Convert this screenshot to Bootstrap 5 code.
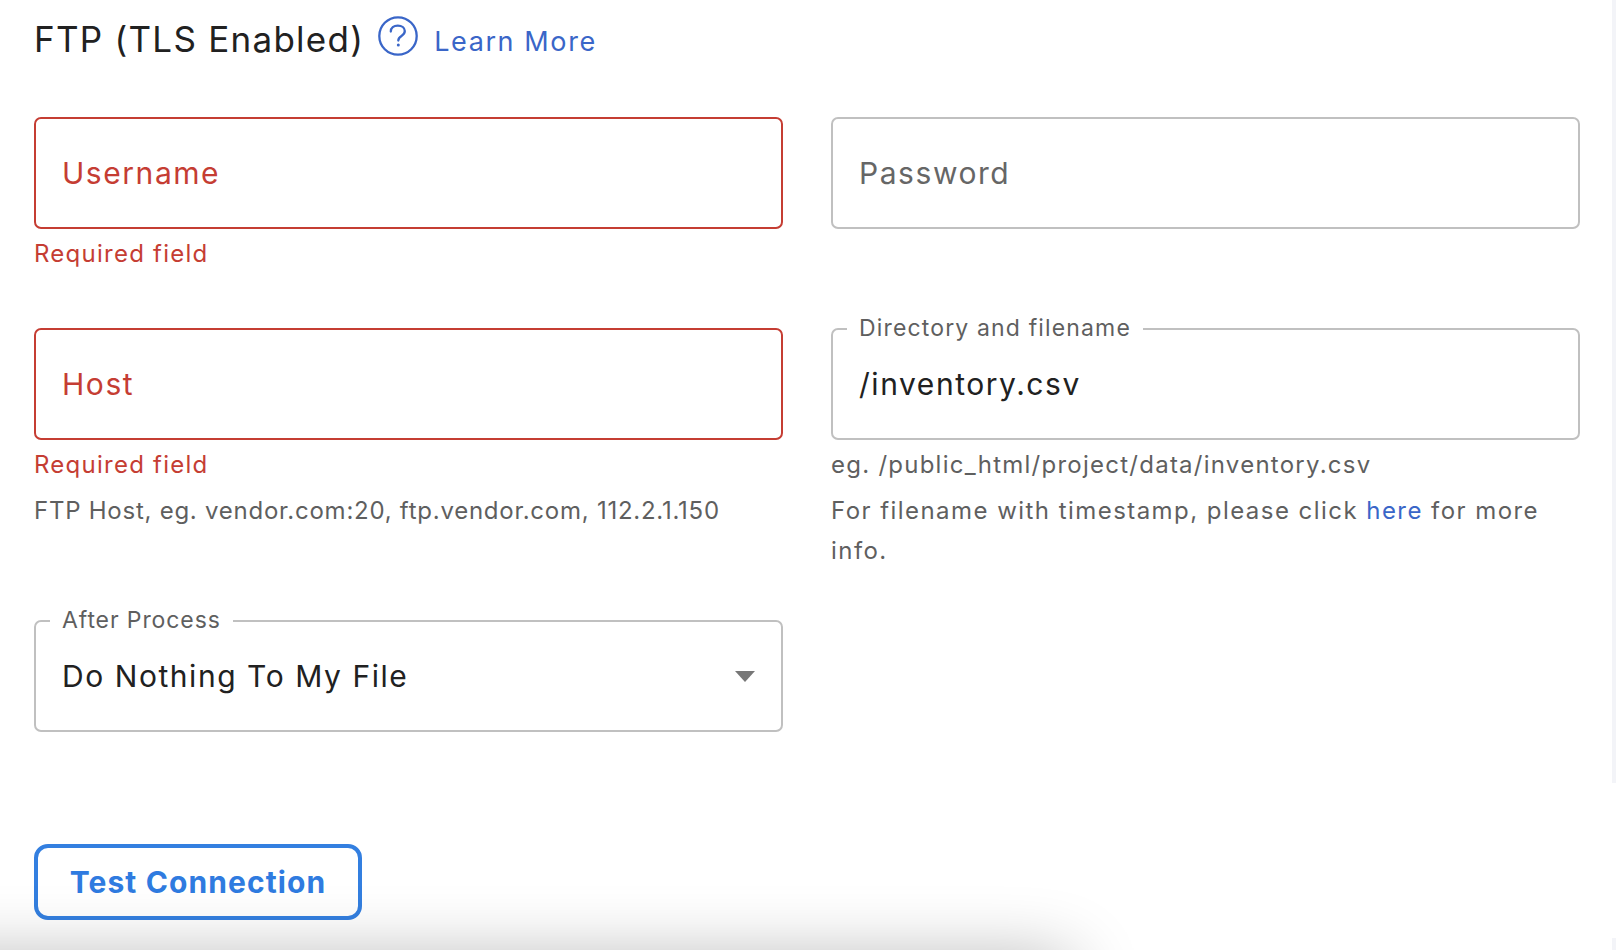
<!doctype html>
<html lang="en"><head><meta charset="utf-8"><title>FTP</title>
<link href="https://cdn.jsdelivr.net/npm/bootstrap@5.3.0/dist/css/bootstrap.min.css" rel="stylesheet">
<style>
html,body{height:950px;overflow:hidden}
body{background:#fff;font-family:"Inter","Liberation Sans",sans-serif;color:#212121;position:relative}
.page-wrap{padding:0 36px 0 34px;height:950px}
.edge-strip{position:absolute;right:0;width:4px;background:#f3f4f8}
.edge-a{top:0;height:783px}.edge-b{top:938px;bottom:0}
.bottom-glow{position:absolute;left:0;bottom:0;width:1300px;height:110px;overflow:hidden;pointer-events:none;z-index:2}
.bottom-glow::before{content:"";position:absolute;left:-120px;top:120px;width:1190px;height:60px;box-shadow:0 0 70px rgba(0,0,0,.32)}
.title-row{height:117px;padding-top:16px}
.title-text{font-size:35px;letter-spacing:1.26px;line-height:40px;font-weight:400;margin:3px 0 0;color:#212121}
.learn-link{font-size:27px;letter-spacing:1.6px;color:#3a66c8;text-decoration:none;line-height:44px;margin-top:4px}
.help-ico{width:40px;height:40px;margin:0 16px 0 14px;flex:none}
.form-cols{--bs-gutter-x:48px}
.field-box{position:relative}
.field-input.form-control,.field-input.form-select{height:112px;border:2px solid #c0c0c0;border-radius:7px;font-size:30px;padding:0 26px;color:#212121;letter-spacing:1.55px;box-shadow:none;background-color:#fff}
.field-input::placeholder{color:#666;opacity:1}
.field-input.is-err.form-control{border-color:#c53d33;background-image:none;padding-right:26px}
.field-input.is-err::placeholder{color:#c53d33}
.field-input.form-select{background-image:none}
.float-tag{position:absolute;left:16px;top:-14px;background:#fff;padding:0 12px;font-size:23px;line-height:28px;color:#5f5f5f;letter-spacing:1.15px}
.float-tag.tag-tight{letter-spacing:.9px}
.caret-tri{position:absolute;right:28px;top:50%;margin-top:-5px;width:0;height:0;border-left:10px solid transparent;border-right:10px solid transparent;border-top:11px solid #777}
.hint-line{font-size:24px;line-height:40px;color:#5f5f5f;letter-spacing:1.25px;margin:6px 0 0}
.hint-line.hint-first{margin-top:5px}
.err-line{color:#c53d33}
.hint-tight{letter-spacing:.75px}
.hint-wide{letter-spacing:1.45px}
.hint-line a{color:#3a66c8;text-decoration:none}
.row-a{height:211px}.row-b{height:292px}.row-c{height:224px}
.test-btn.btn{border:4px solid #337fe0;border-radius:14px;color:#2f7be0;background:transparent;font-size:30px;font-weight:700;height:76px;width:328px;padding:0;letter-spacing:1.1px}
</style></head><body>
<div class="edge-strip edge-a"></div><div class="edge-strip edge-b"></div>
<div class="page-wrap position-relative">
<div class="title-row d-flex align-items-start">
<h1 class="title-text">FTP (TLS Enabled)</h1>
<svg class="help-ico" viewBox="0 0 40 40" fill="none" stroke="#3a66c8" stroke-width="2.300"><circle cx="20" cy="20" r="18.700"/><path d="M12.800 15.600c0-3.600 3-6 7-6s7 2.300 7 5.500c0 2.400-1.400 3.700-3.300 4.900-1.900 1.200-3.200 2.200-3.200 4.500" stroke-linecap="round"/><circle cx="20.300" cy="29" r="1.500" fill="#3a66c8" stroke="none"/></svg>
<a class="learn-link" href="#">Learn More</a>
</div>
<div class="row form-cols row-a">
<div class="col-6"><div class="field-box"><input class="form-control field-input is-err" placeholder="Username"></div><p class="hint-line err-line hint-first">Required field</p></div>
<div class="col-6"><div class="field-box"><input class="form-control field-input" placeholder="Password"></div></div>
</div>
<div class="row form-cols row-b">
<div class="col-6"><div class="field-box"><input class="form-control field-input is-err" placeholder="Host"></div><p class="hint-line err-line hint-first">Required field</p><p class="hint-line hint-tight">FTP Host, eg. vendor.com:20, ftp.vendor.com, 112.2.1.150</p></div>
<div class="col-6"><div class="field-box"><input class="form-control field-input" value="/inventory.csv"><span class="float-tag">Directory and filename</span></div><p class="hint-line hint-first">eg. /public_html/project/data/inventory.csv</p><p class="hint-line hint-wide">For filename with timestamp, please click <a href="#">here</a> for more info.</p></div>
</div>
<div class="row form-cols row-c">
<div class="col-6"><div class="field-box"><select class="form-select field-input"><option>Do Nothing To My File</option></select><span class="float-tag tag-tight">After Process</span><span class="caret-tri"></span></div></div>
</div>
<button class="btn test-btn" type="button">Test Connection</button>
</div>
<div class="bottom-glow"></div>
</body></html>
